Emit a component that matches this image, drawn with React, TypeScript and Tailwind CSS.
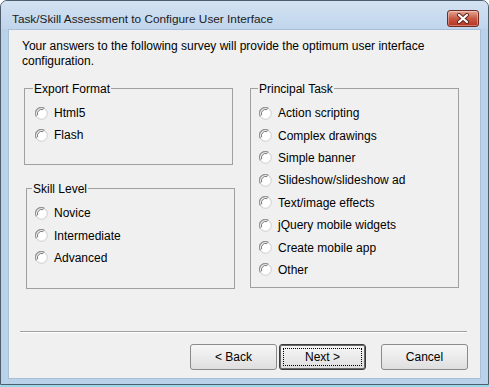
import React from 'react'

function Radio({ label }: { label: string }) {
  return (
    <label className="flex h-[22.4px] items-center gap-[6px]">
      <svg width="13" height="13" viewBox="0 0 13 13" className="shrink-0">
        <circle cx="6.5" cy="6.5" r="5.8" fill="#ffffff" stroke="#cccccc" strokeWidth="1" />
        <path d="M1.4 9.4 A5.8 5.8 0 0 1 9.4 1.4" fill="none" stroke="#959595" strokeWidth="1.2" />
        <path d="M2.7 8.3 A4.3 4.3 0 0 1 8.3 2.7" fill="none" stroke="#6a6a6a" strokeWidth="0.9" />
        <path d="M2.9 10.2 A5 5 0 0 0 10.2 2.9" fill="none" stroke="#ececec" strokeWidth="1" />
      </svg>
      <span>{label}</span>
    </label>
  )
}

function GroupBox({
  title,
  className,
  labelClass,
  padClass,
  rowClass,
  items,
}: {
  title: string
  className: string
  labelClass: string
  padClass: string
  rowClass?: string
  items: string[]
}) {
  return (
    <div className={`border border-[#a0a0a0] ${className}`}>
      <div className={`-mt-[7px] w-fit bg-[#f0f0f0] px-[1px] leading-[14px] ${labelClass}`}>{title}</div>
      <div className={`mt-[6px] ${padClass}`}>
        {items.map((item) => (
          <div key={item} className={rowClass}>
            <Radio label={item} />
          </div>
        ))}
      </div>
    </div>
  )
}

function Button({ label, isDefault }: { label: string; isDefault?: boolean }) {
  return (
    <button
      className={`flex h-[26px] w-[87px] items-center justify-center rounded-[3px] bg-gradient-to-b from-[#f6f6f6] via-[#ebebeb] to-[#dedede] ${
        isDefault ? 'border border-[#3a3a3a] p-[3px] shadow-[inset_0_0_0_1px_#6a6a6a]' : 'border border-[#8a8a8a]'
      }`}
    >
      {isDefault ? (
        <span className="flex h-full w-full items-center justify-center border border-dotted border-black">
          {label}
        </span>
      ) : (
        label
      )}
    </button>
  )
}

export default function App() {
  return (
    <div className="h-[387px] w-[489px] overflow-hidden bg-white font-['Liberation_Sans',Arial,sans-serif] text-[12px] text-black">
      <div className="flex h-[385px] flex-col rounded-t-[7px] border border-[#4f5d6d] bg-[#bad1ea]">
        {/* title bar */}
        <div className="flex h-[28px] shrink-0 items-start rounded-t-[6px] bg-gradient-to-b from-[#d3e2f2] to-[#c0d5ec] pl-[11px] pr-[9px] pt-[9px]">
          <span className="mt-[2px] flex-1 text-[11.8px] leading-[14px] text-[#1b1b1b]">
            Task/Skill Assessment to Configure User Interface
          </span>
          <div className="flex h-[17px] w-[32px] items-center justify-center rounded-[3px] border border-[#6e2d24] bg-gradient-to-b from-[#e4a594] via-[#c85a44] to-[#b7301e] shadow-[inset_0_0_0_1px_rgba(255,255,255,0.35)]">
            <svg width="14" height="11" viewBox="0 0 14 11">
              <path d="M3 2 L11 9 M11 2 L3 9" stroke="#5a2018" strokeWidth="4" strokeLinecap="round" />
              <path d="M3 2 L11 9 M11 2 L3 9" stroke="#ffffff" strokeWidth="2.2" strokeLinecap="round" />
            </svg>
          </div>
        </div>

        {/* client area */}
        <div className="mx-[7px] mb-[5px] flex flex-1 flex-col border border-[#a9bfd8] bg-[#f0f0f0]">
          <p className="pl-[13px] pt-[9px] leading-[15px]">
            Your answers to the following survey will provide the optimum user interface
            <br />
            configuration.
          </p>

          <div className="mt-[19px] flex">
            <div className="ml-[15px] flex flex-col">
              <GroupBox
                title="Export Format"
                className="h-[77px] w-[209px]"
                labelClass="ml-[8px]"
                padClass="pl-[10px]"
                rowClass="h-[22px]"
                items={['Html5', 'Flash']}
              />
              <GroupBox
                title="Skill Level"
                className="ml-[2px] mt-[23px] h-[101px] w-[209px]"
                labelClass="ml-[5px]"
                padClass="pl-[8px]"
                items={['Novice', 'Intermediate', 'Advanced']}
              />
            </div>
            <GroupBox
              title="Principal Task"
              className="ml-[15px] h-[200px] w-[209px]"
              labelClass="ml-[7px]"
              padClass="pl-[8px]"
              items={[
                'Action scripting',
                'Complex drawings',
                'Simple banner',
                'Slideshow/slideshow ad',
                'Text/image effects',
                'jQuery mobile widgets',
                'Create mobile app',
                'Other',
              ]}
            />
          </div>

          <div className="ml-[11px] mr-[13px] mt-[42px] border-b border-t border-b-white border-t-[#a0a0a0]" />

          <div className="mr-[12px] mt-[11px] flex justify-end">
            <Button label="< Back" />
            <div className="ml-[2px]">
              <Button label="Next >" isDefault />
            </div>
            <div className="ml-[15px]">
              <Button label="Cancel" />
            </div>
          </div>
        </div>
      </div>
      <div className="h-[2px] bg-[#99d9ea]" />
    </div>
  )
}
